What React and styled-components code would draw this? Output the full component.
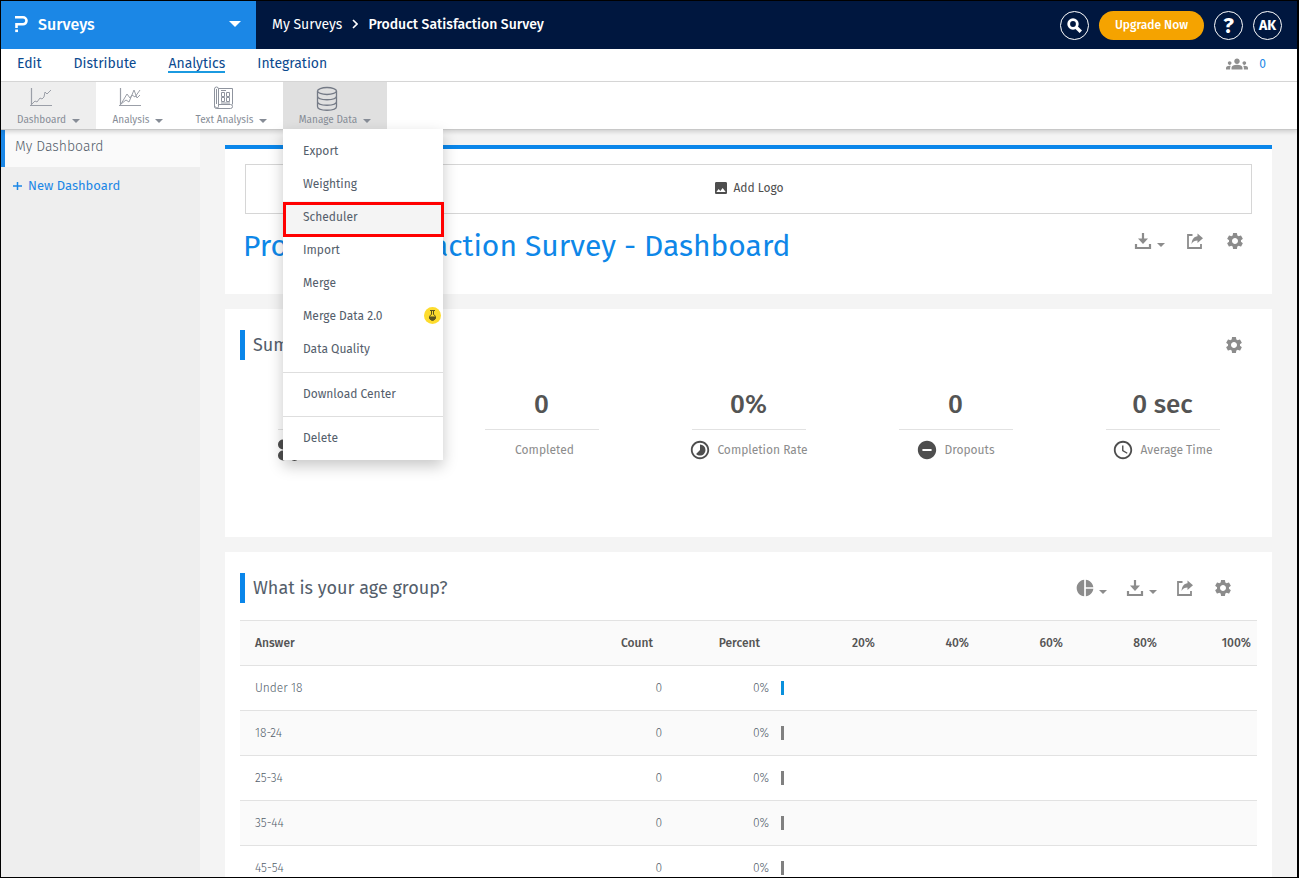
import React from 'react';
import styled, { createGlobalStyle } from 'styled-components';
import {
  MdAccessTime,
  MdGroups,
  MdInsertPhoto,
  MdPieChart,
  MdRemoveCircle,
  MdSettings,
  MdTimelapse,
} from 'react-icons/md';

const tabs = ['Edit', 'Distribute', 'Analytics', 'Integration'];

const menuGroups = [
  ['Export', 'Weighting', 'Scheduler', 'Import', 'Merge', 'Merge Data 2.0', 'Data Quality'],
  ['Download Center'],
  ['Delete'],
];

const stats = [
  { value: '0', label: 'Surveys Viewed', icon: <PeopleIcon /> },
  { value: '0', label: 'Completed' },
  { value: '0%', label: 'Completion Rate', icon: <MdTimelapse /> },
  { value: '0', label: 'Dropouts', icon: <MdRemoveCircle /> },
  { value: '0 sec', label: 'Average Time', icon: <MdAccessTime /> },
];

const answers = ['Under 18', '18-24', '25-34', '35-44', '45-54'];
const scale = ['20%', '40%', '60%', '80%', '100%'];

export default function App() {
  return (
    <Frame>
      <GlobalStyle />
      <Header>
        <ProductButton>
          <LogoIcon />
          <span>Surveys</span>
          <Caret $size={6} />
        </ProductButton>
        <Breadcrumb>
          <a href="#surveys">My Surveys</a>
          <ChevronIcon />
          <strong>Product Satisfaction Survey</strong>
        </Breadcrumb>
        <HeaderActions>
          <RoundButton aria-label="Search">
            <SearchIcon />
          </RoundButton>
          <UpgradeButton>Upgrade Now</UpgradeButton>
          <RoundButton $large>?</RoundButton>
          <RoundButton>AK</RoundButton>
        </HeaderActions>
      </Header>

      <TabBar>
        {tabs.map((tab) => (
          <Tab href={`#${tab}`} key={tab} $active={tab === 'Analytics'}>
            {tab}
          </Tab>
        ))}
        <Collaborators>
          <MdGroups size={22} />
          <a href="#collaborators">0</a>
        </Collaborators>
      </TabBar>

      <Toolbar>
        <Tool $width={95} $shade="#eeeeee" icon={<LineChartIcon />} label="Dashboard" />
        <Tool $width={84} icon={<MultiLineIcon />} label="Analysis" />
        <Tool $width={103} icon={<DocumentIcon />} label="Text Analysis" />
        <MenuHolder>
          <Tool $width={104} $shade="#e0e0e0" icon={<DatabaseIcon />} label="Manage Data" />
          <Menu>
            {menuGroups.map((group) => (
              <MenuGroup key={group[0]}>
                {group.map((item) => (
                  <MenuItem key={item} $marked={item === 'Scheduler'}>
                    {item}
                    {item === 'Merge Data 2.0' && <FlaskBadge />}
                  </MenuItem>
                ))}
              </MenuGroup>
            ))}
          </Menu>
        </MenuHolder>
      </Toolbar>

      <Body>
        <Sidebar>
          <SidebarItem href="#dashboard">My Dashboard</SidebarItem>
          <NewDashboard>
            <PlusIcon />
            New Dashboard
          </NewDashboard>
        </Sidebar>
        <Content>
          <TitleCard>
            <AddLogo>
              <MdInsertPhoto size={16} />
              Add Logo
            </AddLogo>
            <TitleRow>
              <h1>Product Satisfaction Survey - Dashboard</h1>
              <CardActions />
            </TitleRow>
          </TitleCard>

          <SummaryCard>
            <CardHeader>
              <h2>Summary</h2>
              <Actions $inset={13}>
                <IconButton aria-label="Settings">
                  <MdSettings size={20} />
                </IconButton>
              </Actions>
            </CardHeader>
            <Stats>
              {stats.map((stat) => (
                <Stat key={stat.label}>
                  <StatValue>{stat.value}</StatValue>
                  <StatLabel>
                    <StatIcon>{stat.icon}</StatIcon>
                    {stat.label}
                  </StatLabel>
                </Stat>
              ))}
            </Stats>
          </SummaryCard>

          <Card>
            <CardHeader>
              <h2>What is your age group?</h2>
              <CardActions chart />
            </CardHeader>
            <AnswerTable>
              <colgroup>
                <col />
                <col width="80" />
                <col width="107" />
                <col width="12" />
                {scale.map((step) => (
                  <col width="94" key={step} />
                ))}
              </colgroup>
              <thead>
                <tr>
                  <th>Answer</th>
                  <th>Count</th>
                  <th>Percent</th>
                  <th aria-label="Bar" />
                  {scale.map((step) => (
                    <th key={step}>{step}</th>
                  ))}
                </tr>
              </thead>
              <tbody>
                {answers.map((answer, index) => (
                  <tr key={answer}>
                    <td>{answer}</td>
                    <td>0</td>
                    <td>0%</td>
                    <td colSpan={6}>
                      <Bar $first={index === 0} />
                    </td>
                  </tr>
                ))}
              </tbody>
            </AnswerTable>
          </Card>
        </Content>
      </Body>
    </Frame>
  );
}

function Tool({ icon, label, $width, $shade }) {
  return (
    <ToolButton $width={$width} $shade={$shade}>
      {icon}
      <ToolLabel>
        {label}
        <Caret $size={4} />
      </ToolLabel>
    </ToolButton>
  );
}

function CardActions({ chart }) {
  return (
    <Actions $gap={chart ? 18 : 20} $inset={chart ? 24 : 7}>
      {chart && (
        <IconButton aria-label="Chart type">
          <MdPieChart size={20} />
          <Caret $size={4} />
        </IconButton>
      )}
      <IconButton aria-label="Download">
        <DownloadIcon />
        <Caret $size={4} />
      </IconButton>
      <IconButton aria-label="Share">
        <ShareIcon />
      </IconButton>
      <IconButton aria-label="Settings">
        <MdSettings size={20} />
      </IconButton>
    </Actions>
  );
}

// icons

function LogoIcon() {
  return (
    <svg width="14" height="18" viewBox="0 0 14 18" fill="none" stroke="#fff" strokeWidth="2.6">
      <path d="M0 2.3h8a3.5 3.5 0 0 1 0 7H1.500v3.800" />
      <path d="M.2 15.800h2.800" />
    </svg>
  );
}

function SearchIcon() {
  return (
    <svg width="15" height="15" viewBox="0 0 15 15" fill="none" stroke="#fff">
      <circle cx="6" cy="6" r="4.300" strokeWidth="2.800" />
      <path d="M9.200 9.200l4.600 4.600" strokeWidth="3.400" />
    </svg>
  );
}

function ChevronIcon() {
  return (
    <svg width="6" height="10" viewBox="0 0 6 10" fill="none" stroke="#fff" strokeWidth="1.6">
      <path d="M1 1l4 4-4 4" />
    </svg>
  );
}

function PlusIcon() {
  return (
    <svg width="9" height="9" viewBox="0 0 9 9" stroke="#1b87e6" strokeWidth="1.5">
      <path d="M0 5h9M4.500 1v8" />
    </svg>
  );
}

function LineChartIcon() {
  return (
    <svg width="24" height="24" viewBox="0 0 24 24" fill="none" stroke="#9b9fa8">
      <path d="M2.500 2v18M1 19.500h22" strokeWidth="1.2" />
      <path d="M3 18l3-3 2 1 3-4 2 1 2-2 1-5 2 2 4-4" />
    </svg>
  );
}

function MultiLineIcon() {
  return (
    <svg width="24" height="24" viewBox="0 0 24 24" fill="none" stroke="#9b9fa8">
      <path d="M2.500 2v18M1 19.500h22" strokeWidth="1.2" />
      <path d="M3 18l6-10 3 4 2-3 3 2 5-7M3 18l5-4 3 2 5-12 3 8 3-3" />
    </svg>
  );
}

function DocumentIcon() {
  return (
    <svg width="24" height="24" viewBox="0 0 24 24" fill="none" stroke="#8f949e">
      <path d="M6.500 2.500h14v16M6.500 19V3a2 2 0 0 0-4 0v18a2 2 0 0 0 2 1.500h14a2 2 0 0 0 0-4H6.500v2a1.500 1.500 0 0 1-3 0M4.500 3v15" />
      <path d="M9 4.500h5M9.500 6.500h3v4h-3zM14.500 6.500h3v4h-3zM9.500 11.500h3v4h-3zM14.500 11.500h3v4h-3zM9 17h9" />
    </svg>
  );
}

function DatabaseIcon() {
  return (
    <svg width="24" height="26" viewBox="0 0 24 26" fill="none" stroke="#747a86" strokeWidth="1.3">
      <ellipse cx="12" cy="5" rx="9.500" ry="3.500" />
      <path d="M2.500 5v15.500c0 5 19 5 19 0V5M2.500 10c0 5 19 5 19 0M2.500 15.500c0 5 19 5 19 0" />
    </svg>
  );
}

function DownloadIcon() {
  return (
    <svg width="20" height="20" viewBox="0 0 20 20" fill="none" stroke="currentColor" strokeWidth="2.200">
      <path d="M3 13v4h14v-4M10 2v8" />
      <path d="M5 7.500h10l-5 5.500z" fill="currentColor" stroke="none" />
    </svg>
  );
}

function ShareIcon() {
  return (
    <svg width="20" height="20" viewBox="0 0 20 20" fill="none" stroke="currentColor" strokeWidth="1.800">
      <path d="M7.500 4H3v13h13v-4" />
      <path d="M12.500 2.500l5.500 4.700-5.500 4.700V9.500C10 9.500 8 10 6.500 13 7 8 9 5.500 12.500 5.200z" fill="currentColor" stroke="none" />
    </svg>
  );
}

function PeopleIcon() {
  return (
    <svg viewBox="0 0 20 20" fill="currentColor">
      <circle cx="4.500" cy="5" r="4.500" />
      <circle cx="15" cy="5" r="4.500" />
      <circle cx="4.500" cy="15" r="4.500" />
      <circle cx="15" cy="15.500" r="4.500" />
    </svg>
  );
}

function FlaskBadge() {
  return (
    <Badge>
      <svg width="9" height="11" viewBox="0 0 9 11" fill="none" stroke="#5b5320">
        <path d="M2 .5h5M3.500.5v4a3 3 0 1 0 2 0v-4" />
        <path d="M1.500 7h6a3 3 0 0 1-6 0z" fill="#5b5320" />
      </svg>
    </Badge>
  );
}

// styled components

const GlobalStyle = createGlobalStyle`
  * {
    box-sizing: border-box;
  }
  body {
    margin: 0;
    font-family: 'Fira Sans', 'Open Sans', 'Noto Sans', sans-serif;
    font-size: 12px;
    color: #545e6b;
  }
  button {
    padding: 0;
    border: 0;
    background: transparent;
    color: inherit;
    font: inherit;
    cursor: pointer;
  }
  a {
    color: inherit;
    text-decoration: none;
  }
  svg {
    flex: none;
  }
`;

const Frame = styled.div`
  display: flex;
  flex-direction: column;
  height: 100vh;
  overflow: hidden;
  border: 1px solid #000;
  border-right-width: 2px;
`;

const Caret = styled.span`
  border: ${(props) => props.$size}px solid transparent;
  border-top-color: currentColor;
  border-bottom: 0;
`;

const Header = styled.header`
  display: flex;
  flex: none;
  height: 48px;
  background: #00173f;
  color: #fff;
`;

const ProductButton = styled.button`
  display: flex;
  align-items: center;
  gap: 9px;
  width: 255px;
  padding: 0 15px 2px 14px;
  background: #1b87e6;
  font-size: 16px;
  font-weight: 500;
  ${Caret} {
    margin-left: auto;
  }
`;

const Breadcrumb = styled.nav`
  display: flex;
  align-items: center;
  gap: 10px;
  padding: 0 16px 2px;
  font-size: 14px;
  strong {
    font-weight: 500;
  }
`;

const HeaderActions = styled.div`
  display: flex;
  align-items: center;
  gap: 10px;
  margin-left: auto;
  padding-right: 15px;
`;

const RoundButton = styled.button`
  display: flex;
  align-items: center;
  justify-content: center;
  width: 29px;
  height: 29px;
  border: 1px solid #fff;
  border-radius: 50%;
  font-size: ${(props) => (props.$large ? 22 : 14)}px;
  font-weight: 700;
`;

const UpgradeButton = styled.button`
  height: 29px;
  padding: 0 16px;
  border-radius: 15px;
  background: #f5a300;
  font-weight: 500;
`;

const TabBar = styled.nav`
  display: flex;
  flex: none;
  align-items: center;
  gap: 32px;
  height: 33px;
  padding: 0 31px 2px 16px;
  border-bottom: 1px solid #d9d9d9;
  background: #fff;
`;

const Tab = styled.a`
  font-size: 14px;
  line-height: 15px;
  color: #0b4a8f;
  border-bottom: 2px solid ${(props) => (props.$active ? '#1b9ae0' : 'transparent')};
`;

const Collaborators = styled.div`
  display: flex;
  align-items: center;
  gap: 11px;
  margin-left: auto;
  color: #8f8f8f;
  a {
    color: #1b87e6;
  }
`;

const Toolbar = styled.div`
  position: relative;
  z-index: 1;
  display: flex;
  flex: none;
  height: 48px;
  border-bottom: 1px solid #c8c8c8;
  background: #fff;
  box-shadow: 0 2px 4px rgba(0, 0, 0, 0.15);
`;

const ToolButton = styled.button`
  display: flex;
  flex-direction: column;
  align-items: center;
  justify-content: space-between;
  width: ${(props) => props.$width}px;
  height: 47px;
  padding: 4px 0 2px;
  background: ${(props) => props.$shade || 'transparent'};
  color: #868c96;
  svg {
    margin-right: 16px;
  }
`;

const ToolLabel = styled.span`
  display: flex;
  align-items: center;
  gap: 6px;
  font-size: 10px;
  line-height: 14px;
  ${Caret} {
    margin-top: 2px;
  }
`;

const MenuHolder = styled.div`
  position: relative;
`;

const Menu = styled.div`
  position: absolute;
  top: 100%;
  left: 0;
  width: 160px;
  background: #fff;
  box-shadow: 0 6px 14px rgba(0, 0, 0, 0.22);
`;

const MenuGroup = styled.div`
  padding: 6px 0;
  & + & {
    padding: 5px 0;
    border-top: 1px solid #dedede;
  }
`;

const MenuItem = styled.button`
  position: relative;
  display: flex;
  align-items: center;
  justify-content: space-between;
  width: 100%;
  height: 33px;
  padding: 0 2px 2px 20px;
  background: ${(props) => (props.$marked ? '#f4f4f4' : 'transparent')};
  &::after {
    content: '';
    display: ${(props) => (props.$marked ? 'block' : 'none')};
    position: absolute;
    inset: 1px -1px -3px 0;
    border: 3px solid #ff0000;
  }
`;

const Badge = styled.span`
  display: flex;
  align-items: center;
  justify-content: center;
  width: 17px;
  height: 17px;
  border-radius: 50%;
  background: #fddc2e;
`;

const Body = styled.div`
  display: flex;
  flex: 1;
  min-height: 0;
`;

const Sidebar = styled.aside`
  flex: none;
  width: 199px;
  background: #eeeeee;
`;

const SidebarItem = styled.a`
  display: block;
  height: 37px;
  padding: 7px 10px;
  border-left: 4px solid #1b87e6;
  background: #fafafa;
  font-size: 14px;
  font-weight: 300;
  line-height: 20px;
`;

const NewDashboard = styled.button`
  display: flex;
  align-items: center;
  gap: 6px;
  height: 37px;
  padding: 0 12px;
  color: #1b87e6;
  font-size: 13px;
`;

const Content = styled.main`
  display: flex;
  flex: 1;
  flex-direction: column;
  gap: 15px;
  min-width: 0;
  padding: 15px 25px 0;
  overflow: hidden;
  background: #f4f4f4;
`;

const Card = styled.section`
  flex: none;
  padding: 21px 15px 0;
  background: #fff;
`;

const TitleCard = styled(Card)`
  padding: 15px 20px;
  border-top: 4px solid #0a86ea;
`;

const SummaryCard = styled(Card)`
  min-height: 228px;
`;

const AddLogo = styled.button`
  display: flex;
  align-items: center;
  justify-content: center;
  gap: 4px;
  width: 100%;
  height: 50px;
  padding-bottom: 2px;
  border: 1px solid #d6d6d6;
  color: #4e4e4e;
`;

const TitleRow = styled.div`
  display: flex;
  justify-content: space-between;
  padding-top: 12px;
  h1 {
    margin: 0 -2px 13px;
    color: #0e87e8;
    font-size: 30px;
    font-weight: 400;
    line-height: 40px;
  }
`;

const CardHeader = styled.div`
  display: flex;
  align-items: center;
  justify-content: space-between;
  h2 {
    margin: 0;
    padding-left: 8px;
    border-left: 5px solid #0a86ea;
    font-size: 18px;
    font-weight: 400;
    line-height: 30px;
  }
`;

const Actions = styled.div`
  display: flex;
  align-items: center;
  align-self: flex-start;
  gap: ${(props) => props.$gap}px;
  height: 29px;
  padding-right: ${(props) => props.$inset}px;
  color: #8c8c8c;
`;

const IconButton = styled.button`
  display: flex;
  align-items: center;
  gap: 4px;
  ${Caret} {
    margin-top: 8px;
  }
`;

const Stats = styled.div`
  display: grid;
  grid-template-columns: repeat(5, 1fr);
  margin: 26px -9px 0;
`;

const Stat = styled.div`
  display: flex;
  flex-direction: column;
  align-items: center;
`;

const StatValue = styled.div`
  width: 114px;
  padding-bottom: 5px;
  border-bottom: 1px solid #e2e2e2;
  color: #545454;
  font-size: 26px;
  font-weight: 500;
  line-height: 38px;
  text-align: center;
`;

const StatLabel = styled.div`
  display: flex;
  align-items: center;
  gap: 6px;
  height: 22px;
  margin-top: 9px;
  color: #8c8c8c;
`;

const StatIcon = styled.span`
  display: flex;
  color: #4e4e4e;
  svg {
    width: 22px;
    height: 22px;
  }
`;

const AnswerTable = styled.table`
  width: 100%;
  margin-top: 17px;
  border-collapse: collapse;
  table-layout: fixed;
  text-align: right;
  tr {
    height: 45px;
    border-top: 1px solid #e2e2e2;
  }
  thead tr,
  tbody tr:nth-child(even) {
    background: #fafafa;
  }
  th,
  td {
    padding: 0 6px 0 0;
    font-weight: 300;
  }
  th {
    font-weight: 500;
    color: #545454;
  }
  th:nth-child(2),
  th:nth-child(3) {
    padding-right: 15px;
  }
  th:first-child,
  td:first-child {
    padding-left: 15px;
    text-align: left;
  }
`;

const Bar = styled.div`
  width: 3px;
  height: 14px;
  margin-left: 6px;
  background: ${(props) => (props.$first ? '#0a90dc' : '#808080')};
`;
